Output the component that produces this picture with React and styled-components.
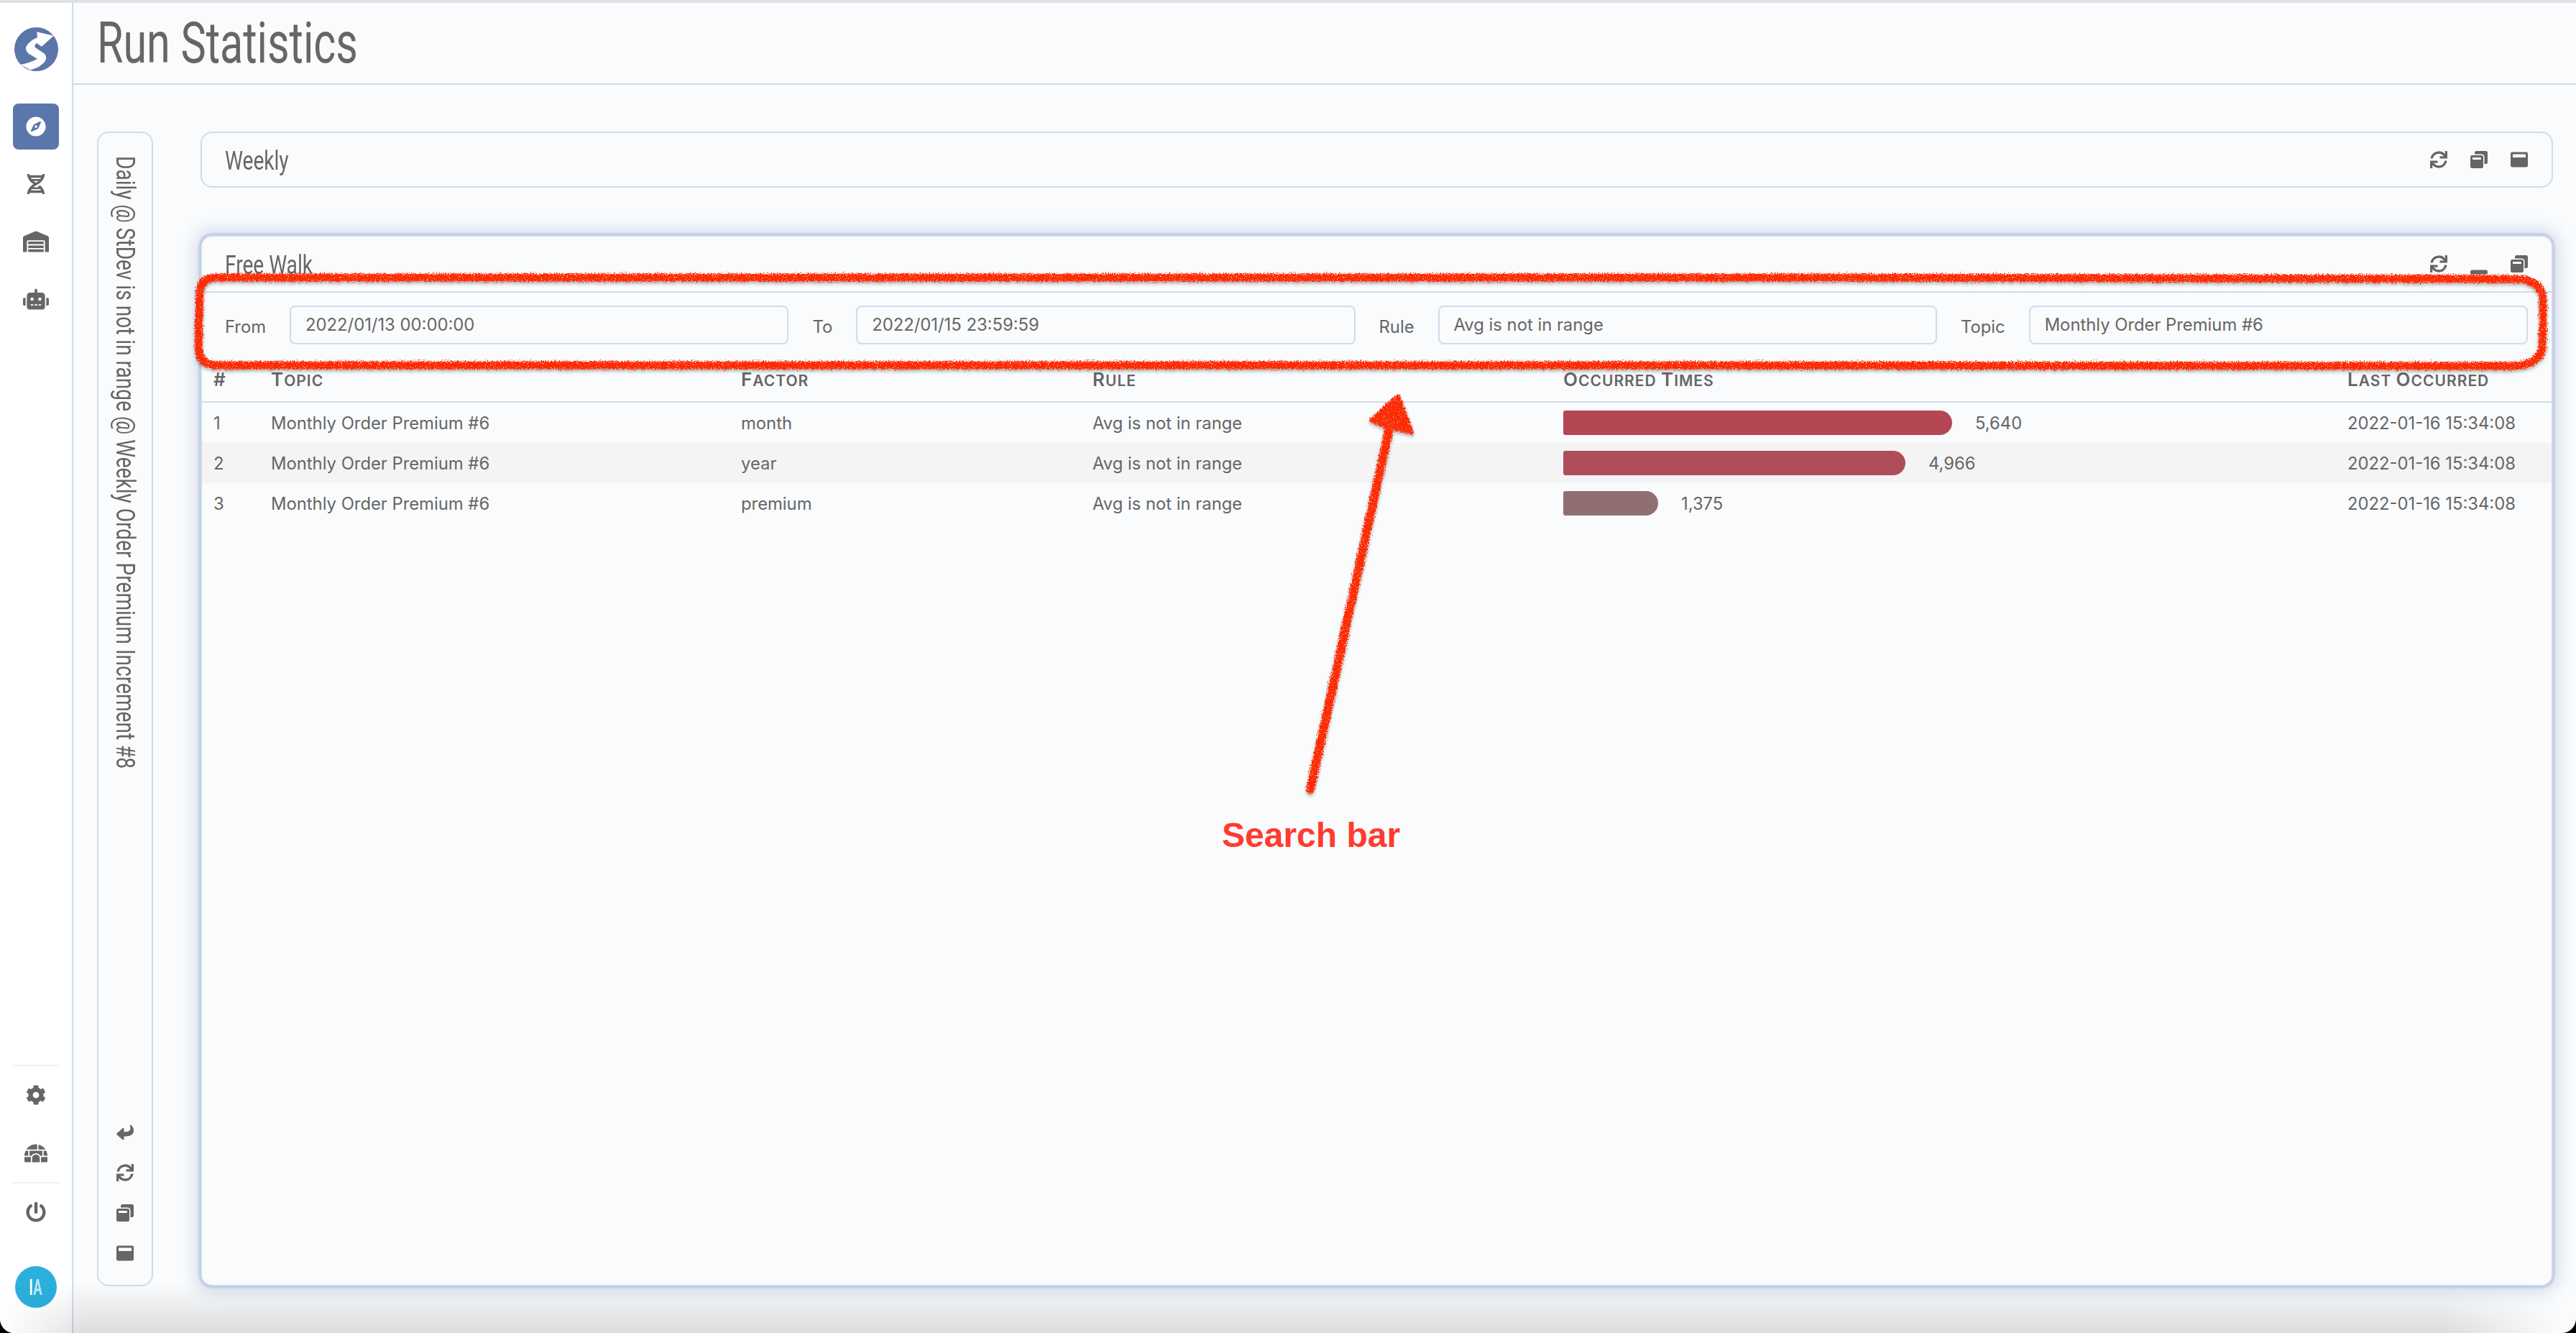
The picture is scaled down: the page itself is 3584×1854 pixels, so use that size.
import React from "react";
import styled, { createGlobalStyle, css } from "styled-components";
import {
  FaCompass,
  FaDna,
  FaWarehouse,
  FaRobot,
  FaCog,
  FaIgloo,
  FaPowerOff,
  FaReply,
  FaSync,
  FaWindowRestore,
  FaWindowMaximize,
  FaWindowMinimize,
} from "react-icons/fa";

const INK = "#666";
const LINE = "#d0dcea";
const BRAND = "#5b76ab";
const PAGE = "#f9fbfd";
const TITLE_FONT = `Roboto, "Liberation Sans", sans-serif`;
const BODY_FONT = `Inter, "Liberation Sans", sans-serif`;

// no condensed family is installed, so the headings are squeezed
const condensed = (ratio) => css`
  display: inline-block;
  transform: scaleX(${ratio});
  transform-origin: left center;
  white-space: nowrap;
`;

const GlobalStyle = createGlobalStyle`
  html, body {
    margin: 0;
    padding: 0;
    background: #000;
  }
  * {
    box-sizing: border-box;
  }
`;

const Page = styled.div`
  position: relative;
  width: 3584px;
  height: 1854px;
  display: flex;
  overflow: hidden;
  border-radius: 0 0 20px 20px;
  border-top: 4px solid #dfe1e4;
  background: ${PAGE};
  color: ${INK};
  font-family: ${BODY_FONT};

  &::before {
    content: "";
    position: absolute;
    left: 0;
    right: 0;
    top: -4px;
    height: 2px;
    background: #fff;
  }
`;

const Sidebar = styled.nav`
  flex: 0 0 102px;
  display: flex;
  flex-direction: column;
  align-items: center;
  background: #fff;
  border-right: 2px solid ${LINE};
  padding: 34px 0 35px;
`;

const Logo = styled.svg`
  width: 61px;
  height: 61px;
  margin-bottom: 45px;
`;

const NavButton = styled.div`
  width: 64px;
  height: 64px;
  display: flex;
  align-items: center;
  justify-content: center;
  border-radius: 8px;
  margin-bottom: 16px;
  font-size: ${(p) => p.$size || 36}px;
  color: ${(p) => (p.$active ? "#fff" : INK)};
  background: ${(p) => (p.$active ? BRAND : "transparent")};
`;

const SidebarSpacer = styled.div`
  flex: 1;
`;

const SidebarRule = styled.div`
  width: 66px;
  height: 2px;
  background: #eff1f5;
`;

const SidebarGroup = styled.div`
  display: flex;
  flex-direction: column;
  align-items: center;
  padding: 8px 0;
  gap: 17px;

  ${NavButton} {
    margin-bottom: 0;
  }
`;

const Avatar = styled.div`
  width: 58px;
  height: 58px;
  margin-top: 35px;
  border-radius: 50%;
  background: #2bb0dc;
  display: flex;
  align-items: center;
  justify-content: center;
  font-family: ${TITLE_FONT};
  font-weight: 700;
  font-size: 32px;
  color: #fff;
`;

const AvatarInitials = styled.span`
  display: inline-block;
  transform: scaleX(0.58);

  b {
    color: #bfe6f5;
    font-weight: 700;
  }
`;

const Main = styled.main`
  flex: 1;
  min-width: 0;
  display: flex;
  flex-direction: column;
`;

const Header = styled.header`
  height: 114px;
  flex: none;
  display: flex;
  align-items: center;
  padding: 0 0 0 33px;
  border-bottom: 2px solid ${LINE};
`;

const Title = styled.h1`
  margin: 0;
  font-family: ${TITLE_FONT};
  font-weight: 400;
  font-size: 80px;
  line-height: 1;
  color: ${INK};
  ${condensed(0.74)}
`;

const Content = styled.div`
  flex: 1;
  display: flex;
  padding: 65px 32px 65px 33px;
  gap: 66px;
  min-height: 0;
`;

const SideCard = styled.aside`
  flex: 0 0 78px;
  display: flex;
  flex-direction: column;
  align-items: center;
  border: 2px solid ${LINE};
  border-radius: 16px;
  padding: 32px 0 32px;
`;

const SideTitle = styled.div`
  writing-mode: vertical-rl;
  font-family: ${TITLE_FONT};
  font-size: 36px;
  line-height: 1;
  flex: 1;
  white-space: nowrap;
  transform: scaleY(0.78);
  transform-origin: center top;
`;

const SideActions = styled.div`
  display: flex;
  flex-direction: column;
  gap: 32px;
  font-size: 24px;
  height: 192px;
  align-items: center;
`;

const ReturnIcon = styled(FaReply)`
  transform: scaleY(-1);
`;

const Cards = styled.div`
  flex: 1;
  min-width: 0;
  display: flex;
  flex-direction: column;
  gap: 66px;
`;

const Card = styled.section`
  border-radius: 16px;
  border: 2px solid ${LINE};
  flex: ${(p) => (p.$active ? 1 : "none")};
  height: ${(p) => (p.$active ? "auto" : "78px")};
  box-shadow: ${(p) =>
    p.$active ? "0 0 3px 2px #b8c5df, 0 0 22px 7px #d3daeb" : "none"};
  background: ${PAGE};
`;

const CardHeader = styled.div`
  display: flex;
  align-items: center;
  justify-content: space-between;
  height: 78px;
  margin-top: ${(p) => (p.$compact ? "-2px" : "0")};
  padding: 0 35px 0 32px;
  border-bottom: ${(p) => (p.$compact ? "none" : `2px solid ${LINE}`)};
`;

const CardTitle = styled.div`
  font-family: ${TITLE_FONT};
  font-size: 36px;
  padding-top: 3px;
  ${condensed(0.78)}
`;

const CardActions = styled.div`
  display: flex;
  align-items: center;
  gap: 32px;
  font-size: 24px;
  margin-right: -2px;
`;

const MinimizeIcon = styled(FaWindowMinimize)`
  margin-top: 8px;
`;

const SearchBar = styled.div`
  display: grid;
  grid-template-columns: auto 1fr auto 1fr auto 1fr auto 1fr;
  align-items: center;
  column-gap: 33px;
  padding: 18px 33px 21px 32px;
`;

const SearchLabel = styled.label`
  font-size: 23.8px;
  padding-top: 4px;
`;

const SearchInput = styled.div`
  height: 54px;
  display: flex;
  align-items: center;
  padding: 0 20px 2px;
  border: 2px solid ${LINE};
  border-radius: 8px;
  font-size: 23.8px;
`;

const TableHead = styled.div`
  display: grid;
  grid-template-columns: ${(p) => p.$columns};
  height: 60px;
  padding: 0 0 4px 16px;
  align-items: center;
  border-bottom: 2px solid ${LINE};
  font-size: 21px;
  font-weight: 600;
  letter-spacing: 1px;
  text-transform: uppercase;
`;

const Cap = styled.span`
  font-size: 26px;
`;

const TableRow = styled.div`
  display: grid;
  grid-template-columns: ${(p) => p.$columns};
  height: 56px;
  padding-left: 16px;
  align-items: center;
  font-size: 23.8px;
  background: ${(p) => (p.$stripe ? "#f4f4f4" : "transparent")};
`;

const BarCell = styled.div`
  display: flex;
  align-items: center;
  gap: 32px;
`;

const Bar = styled.div`
  height: 34px;
  border-radius: 3px 17px 17px 3px;
`;

const Annotation = styled.svg`
  position: absolute;
  left: 0;
  top: -4px;
  width: 3584px;
  height: 1854px;
  pointer-events: none;
`;

const Callout = styled.div`
  position: absolute;
  left: 1700px;
  top: 1130px;
  font-family: "Liberation Sans", Arial, sans-serif;
  font-weight: 700;
  font-size: 48px;
  line-height: 56px;
  color: #ff3b30;
`;

const BottomFade = styled.div`
  position: absolute;
  left: 0;
  right: 0;
  bottom: 0;
  height: 70px;
  background: linear-gradient(to bottom, rgba(0, 0, 0, 0), rgba(0, 0, 0, 0.12));
  mask-image: linear-gradient(
    to right,
    transparent 0,
    #000 120px,
    #000 3400px,
    transparent 3560px
  );
  pointer-events: none;
`;

const COLUMNS = "80px 654px 489px 655px 1091px 1fr";

const rows = [
  { factor: "month", width: 541, color: "#b54654", times: "5,640" },
  { factor: "year", width: 476, color: "#ae4e5a", times: "4,966" },
  { factor: "premium", width: 132, color: "#8f6f72", times: "1,375" },
];

const App = () => (
  <>
    <GlobalStyle />
    <Page>
      <Sidebar>
        <Logo viewBox="0 0 61 61">
          <circle cx="30.5" cy="30.5" r="30.5" fill={BRAND} />
          <path
            d="M54.7 11.7 L31.3 6.3 L32 14 Q20 19 16 28 Q15 35 24 39 L32 44 Q20 50 8.3 52 L22.3 59.3 Q36 56 43 47 Q47 39 38 34 L29 28 Q27 25 31 22 L38 26.7 Z"
            fill="#fff"
          />
        </Logo>
        <NavButton $active $size={28}>
          <FaCompass />
        </NavButton>
        <NavButton $size={28}>
          <FaDna />
        </NavButton>
        <NavButton>
          <FaWarehouse />
        </NavButton>
        <NavButton>
          <FaRobot />
        </NavButton>
        <SidebarSpacer />
        <SidebarRule />
        <SidebarGroup>
          <NavButton $size={28}>
            <FaCog />
          </NavButton>
          <NavButton $size={32}>
            <FaIgloo />
          </NavButton>
        </SidebarGroup>
        <SidebarRule />
        <SidebarGroup>
          <NavButton $size={28}>
            <FaPowerOff />
          </NavButton>
        </SidebarGroup>
        <Avatar>
          <AvatarInitials>
            I<b>A</b>
          </AvatarInitials>
        </Avatar>
      </Sidebar>
      <Main>
        <Header>
          <Title>Run Statistics</Title>
        </Header>
        <Content>
          <SideCard>
            <SideTitle>
              Daily @ StDev is not in range @ Weekly Order Premium Increment #8
            </SideTitle>
            <SideActions>
              <ReturnIcon />
              <FaSync />
              <FaWindowRestore />
              <FaWindowMaximize />
            </SideActions>
          </SideCard>
          <Cards>
            <Card>
              <CardHeader $compact>
                <CardTitle>Weekly</CardTitle>
                <CardActions>
                  <FaSync />
                  <FaWindowRestore />
                  <FaWindowMaximize />
                </CardActions>
              </CardHeader>
            </Card>
            <Card $active>
              <CardHeader>
                <CardTitle>Free Walk</CardTitle>
                <CardActions>
                  <FaSync />
                  <MinimizeIcon />
                  <FaWindowRestore />
                </CardActions>
              </CardHeader>
              <SearchBar>
                <SearchLabel>From</SearchLabel>
                <SearchInput>2022/01/13 00:00:00</SearchInput>
                <SearchLabel>To</SearchLabel>
                <SearchInput>2022/01/15 23:59:59</SearchInput>
                <SearchLabel>Rule</SearchLabel>
                <SearchInput>Avg is not in range</SearchInput>
                <SearchLabel>Topic</SearchLabel>
                <SearchInput>Monthly Order Premium #6</SearchInput>
              </SearchBar>
              <TableHead $columns={COLUMNS}>
                <Cap>#</Cap>
                <span>
                  <Cap>T</Cap>opic
                </span>
                <span>
                  <Cap>F</Cap>actor
                </span>
                <span>
                  <Cap>R</Cap>ule
                </span>
                <span>
                  <Cap>O</Cap>ccurred <Cap>T</Cap>imes
                </span>
                <span>
                  <Cap>L</Cap>ast <Cap>O</Cap>ccurred
                </span>
              </TableHead>
              {rows.map((row, index) => (
                <TableRow key={row.factor} $columns={COLUMNS} $stripe={index === 1}>
                  <span>{index + 1}</span>
                  <span>Monthly Order Premium #6</span>
                  <span>{row.factor}</span>
                  <span>Avg is not in range</span>
                  <BarCell>
                    <Bar style={{ width: row.width, background: row.color }} />
                    <span>{row.times}</span>
                  </BarCell>
                  <span>2022-01-16 15:34:08</span>
                </TableRow>
              ))}
            </Card>
          </Cards>
        </Content>
      </Main>
      <BottomFade />
      <Annotation viewBox="0 0 3584 1854">
        <defs>
          <filter id="rough" x="-2%" y="-5%" width="104%" height="110%">
            <feTurbulence type="fractalNoise" baseFrequency="0.55" numOctaves="2" seed="4" result="noise" />
            <feDisplacementMap
              in="SourceGraphic"
              in2="noise"
              scale="9"
              xChannelSelector="R"
              yChannelSelector="G"
              result="rough"
            />
            <feColorMatrix
              in="noise"
              type="matrix"
              values="0 0 0 0 0  0 0 0 0 0  0 0 0 0 0  0 0 0 12 -3.2"
              result="speckle"
            />
            <feComposite in="rough" in2="speckle" operator="in" result="chalk" />
            <feDropShadow in="chalk" dx="0" dy="3" stdDeviation="2" floodColor="#000" floodOpacity="0.3" />
          </filter>
        </defs>
        <g filter="url(#rough)" fill="none" stroke="#ff2a00" strokeLinecap="round" strokeLinejoin="round">
          <path
            d="M3538 442 L3538 415 Q3536 391 3505 388 L2500 386 L300 386 Q280 387 278 404 L276 485 Q278 507 300 508 L2200 508 L3500 509 Q3532 506 3537 485 L3538 450"
            strokeWidth="11"
          />
          <path d="M1823 1098 L1932 600" strokeWidth="12" />
          <path d="M1945 551 L1908 585 L1932 594 L1964 601 Z" fill="#ff2a00" strokeWidth="6" />
        </g>
      </Annotation>
      <Callout>Search bar</Callout>
    </Page>
  </>
);

export default App;
